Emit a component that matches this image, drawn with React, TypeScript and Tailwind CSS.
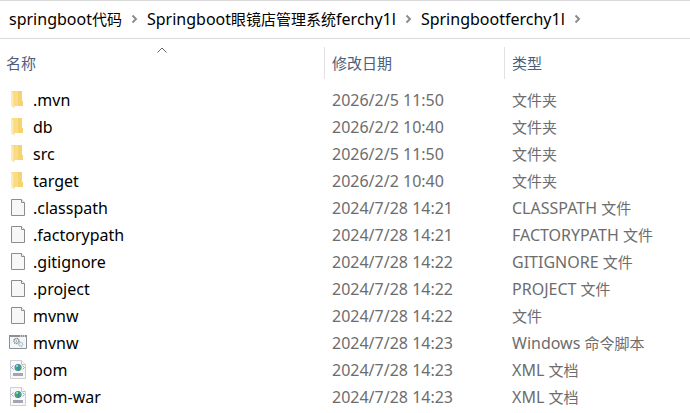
import { Fragment } from "react";
import type { ReactNode } from "react";

type FileKind = "folder" | "file" | "script" | "xml";

interface Entry {
  name: string;
  modified: string;
  type: string;
  kind: FileKind;
}

const crumbs = ["springboot代码", "Springboot眼镜店管理系统ferchy1l", "Springbootferchy1l"];

const entries: Entry[] = [
  { name: ".mvn", modified: "2026/2/5 11:50", type: "文件夹", kind: "folder" },
  { name: "db", modified: "2026/2/2 10:40", type: "文件夹", kind: "folder" },
  { name: "src", modified: "2026/2/5 11:50", type: "文件夹", kind: "folder" },
  { name: "target", modified: "2026/2/2 10:40", type: "文件夹", kind: "folder" },
  { name: ".classpath", modified: "2024/7/28 14:21", type: "CLASSPATH 文件", kind: "file" },
  { name: ".factorypath", modified: "2024/7/28 14:21", type: "FACTORYPATH 文件", kind: "file" },
  { name: ".gitignore", modified: "2024/7/28 14:22", type: "GITIGNORE 文件", kind: "file" },
  { name: ".project", modified: "2024/7/28 14:22", type: "PROJECT 文件", kind: "file" },
  { name: "mvnw", modified: "2024/7/28 14:22", type: "文件", kind: "file" },
  { name: "mvnw", modified: "2024/7/28 14:23", type: "Windows 命令脚本", kind: "script" },
  { name: "pom", modified: "2024/7/28 14:23", type: "XML 文档", kind: "xml" },
  { name: "pom-war", modified: "2024/7/28 14:23", type: "XML 文档", kind: "xml" },
];

function FolderIcon() {
  return (
    <svg width="18" height="20" viewBox="0 0 18 20" aria-hidden="true">
      <path d="M2 1h11v10h1v5H2z" fill="#f9dc84" />
      <path d="M9 1h4v10h1v5H9z" fill="#f6d36f" />
      <path d="M2 1l3 2.5V18l-3-1.5z" fill="#fdebb5" />
      <path d="M5 3.5V18" stroke="#efcc6a" strokeWidth="0.6" />
    </svg>
  );
}

function FileIcon() {
  return (
    <svg width="18" height="20" viewBox="0 0 18 20" aria-hidden="true">
      <path d="M2.5 1.5h10l3 3v13h-13z" fill="#f7f7f7" stroke="#8c8c8c" />
      <path d="M12.5 1.5v3h3" fill="#fff" stroke="#8c8c8c" />
    </svg>
  );
}

function ScriptIcon() {
  return (
    <svg width="18" height="20" viewBox="0 0 18 20" aria-hidden="true">
      <path d="M0.5 2.5h17v13h-17z" fill="#f5f6f7" stroke="#8b9095" />
      <path d="M0 2h18v2H0z" fill="#8b9095" />
      <path d="M11 3h1M13 3h1M15 3h1" stroke="#fff" />
      <circle cx="7.5" cy="8" r="2.5" fill="none" stroke="#858585" strokeWidth="1.4" strokeDasharray="1.2 0.5" />
      <circle cx="7.5" cy="8" r="0.8" fill="#999" />
      <circle cx="11.8" cy="11.3" r="2" fill="#e4f1f8" stroke="#8fb5cc" strokeWidth="1.2" strokeDasharray="1.1 0.5" />
    </svg>
  );
}

function XmlIcon() {
  return (
    <svg width="18" height="20" viewBox="0 0 18 20" aria-hidden="true">
      <path d="M1.5 0.5h11l4 4v14h-15z" fill="#f8f8f9" stroke="#cfcfcf" />
      <path d="M12.5 0.5v4h4" fill="#fff" stroke="#c4c4c4" />
      <path d="M4.5 5.5l-2 2 2 2M13.5 5.5l2 2-2 2" fill="none" stroke="#a3abb8" />
      <circle cx="9" cy="7.5" r="3.5" fill="#3b82c4" />
      <path d="M6 6l2.5-1.8 1.5 1.6-2 1.8 1 1.8-1.5 1.2L6 8.5zM10.5 5l1.8 1.4v2.4l-1.4 1.2-1-2.2z" fill="#4bae50" />
      <path d="M7 5.5l1.5-.8.7 1.2-1.4 1.3z" fill="#b5e8ef" />
      <path d="M4 13h10v3H4z" fill="#a5a4b2" />
    </svg>
  );
}

const icons: Record<FileKind, ReactNode> = {
  folder: <FolderIcon />,
  file: <FileIcon />,
  script: <ScriptIcon />,
  xml: <XmlIcon />,
};

// Chinese runs are set one pixel smaller than the Latin text around them.
function Label({ text }: { text: string }) {
  return text.split(/([\u4e00-\u9fff]+)/).map((part, i) =>
    i % 2 ? (
      <span key={i} className="text-[15px]">
        {part}
      </span>
    ) : (
      part
    ),
  );
}

function Breadcrumb() {
  return (
    <nav
      aria-label="路径"
      className="flex h-[39px] items-center border-y border-[#d9d9d9] pb-[2px] pl-[9px] text-black"
    >
      {crumbs.map((crumb) => (
        <Fragment key={crumb}>
          <a href="#" className="whitespace-nowrap">
            <Label text={crumb} />
          </a>
          <svg width="25" height="10" viewBox="0 0 25 10" className="shrink-0" aria-hidden="true">
            <path d="M10.5 1.5L14 5l-3.5 3.5" fill="none" stroke="#8a8a8a" strokeWidth="1.9" />
          </svg>
        </Fragment>
      ))}
    </nav>
  );
}

function HeaderCell({ label, sorted, first }: { label: string; sorted?: boolean; first?: boolean }) {
  return (
    <th className="p-0 text-left font-normal" aria-sort={sorted ? "ascending" : undefined}>
      <button
        type="button"
        className={`relative flex h-8 w-full items-center text-[15px] text-[#4c607a] ${
          first ? "pl-[6px]" : "border-l border-[#e2e2e2] pl-[7px]"
        }`}
      >
        {label}
        {sorted && (
          <svg
            width="10"
            height="6"
            viewBox="0 0 10 6"
            className="absolute top-0 left-1/2 -translate-x-1/2"
            aria-hidden="true"
          >
            <path d="M0.5 5.5L5 1l4.5 4.5" fill="none" stroke="#666" />
          </svg>
        )}
      </button>
    </th>
  );
}

export default function App() {
  return (
    <main className="overflow-hidden bg-white font-['Noto_Sans','Noto_Sans_CJK_SC',sans-serif] text-[16px] leading-[20px]">
      <Breadcrumb />
      <table className="w-full table-fixed border-collapse">
        <colgroup>
          <col className="w-[324px]" />
          <col className="w-[180px]" />
          <col />
        </colgroup>
        <thead>
          <tr className="h-[47px]">
            <HeaderCell label="名称" sorted first />
            <HeaderCell label="修改日期" />
            <HeaderCell label="类型" />
          </tr>
        </thead>
        <tbody className="text-[#6d6d6d]">
          {entries.map((entry) => (
            <tr key={`${entry.name}-${entry.kind}`} className="h-[27px] whitespace-nowrap">
              <td className="p-0 pl-[9px] text-black">
                <div className="flex items-center gap-[6px]">
                  {icons[entry.kind]}
                  {entry.name}
                </div>
              </td>
              <td className="p-0 pl-2">{entry.modified}</td>
              <td className="p-0 pl-2">
                <Label text={entry.type} />
              </td>
            </tr>
          ))}
        </tbody>
      </table>
    </main>
  );
}
